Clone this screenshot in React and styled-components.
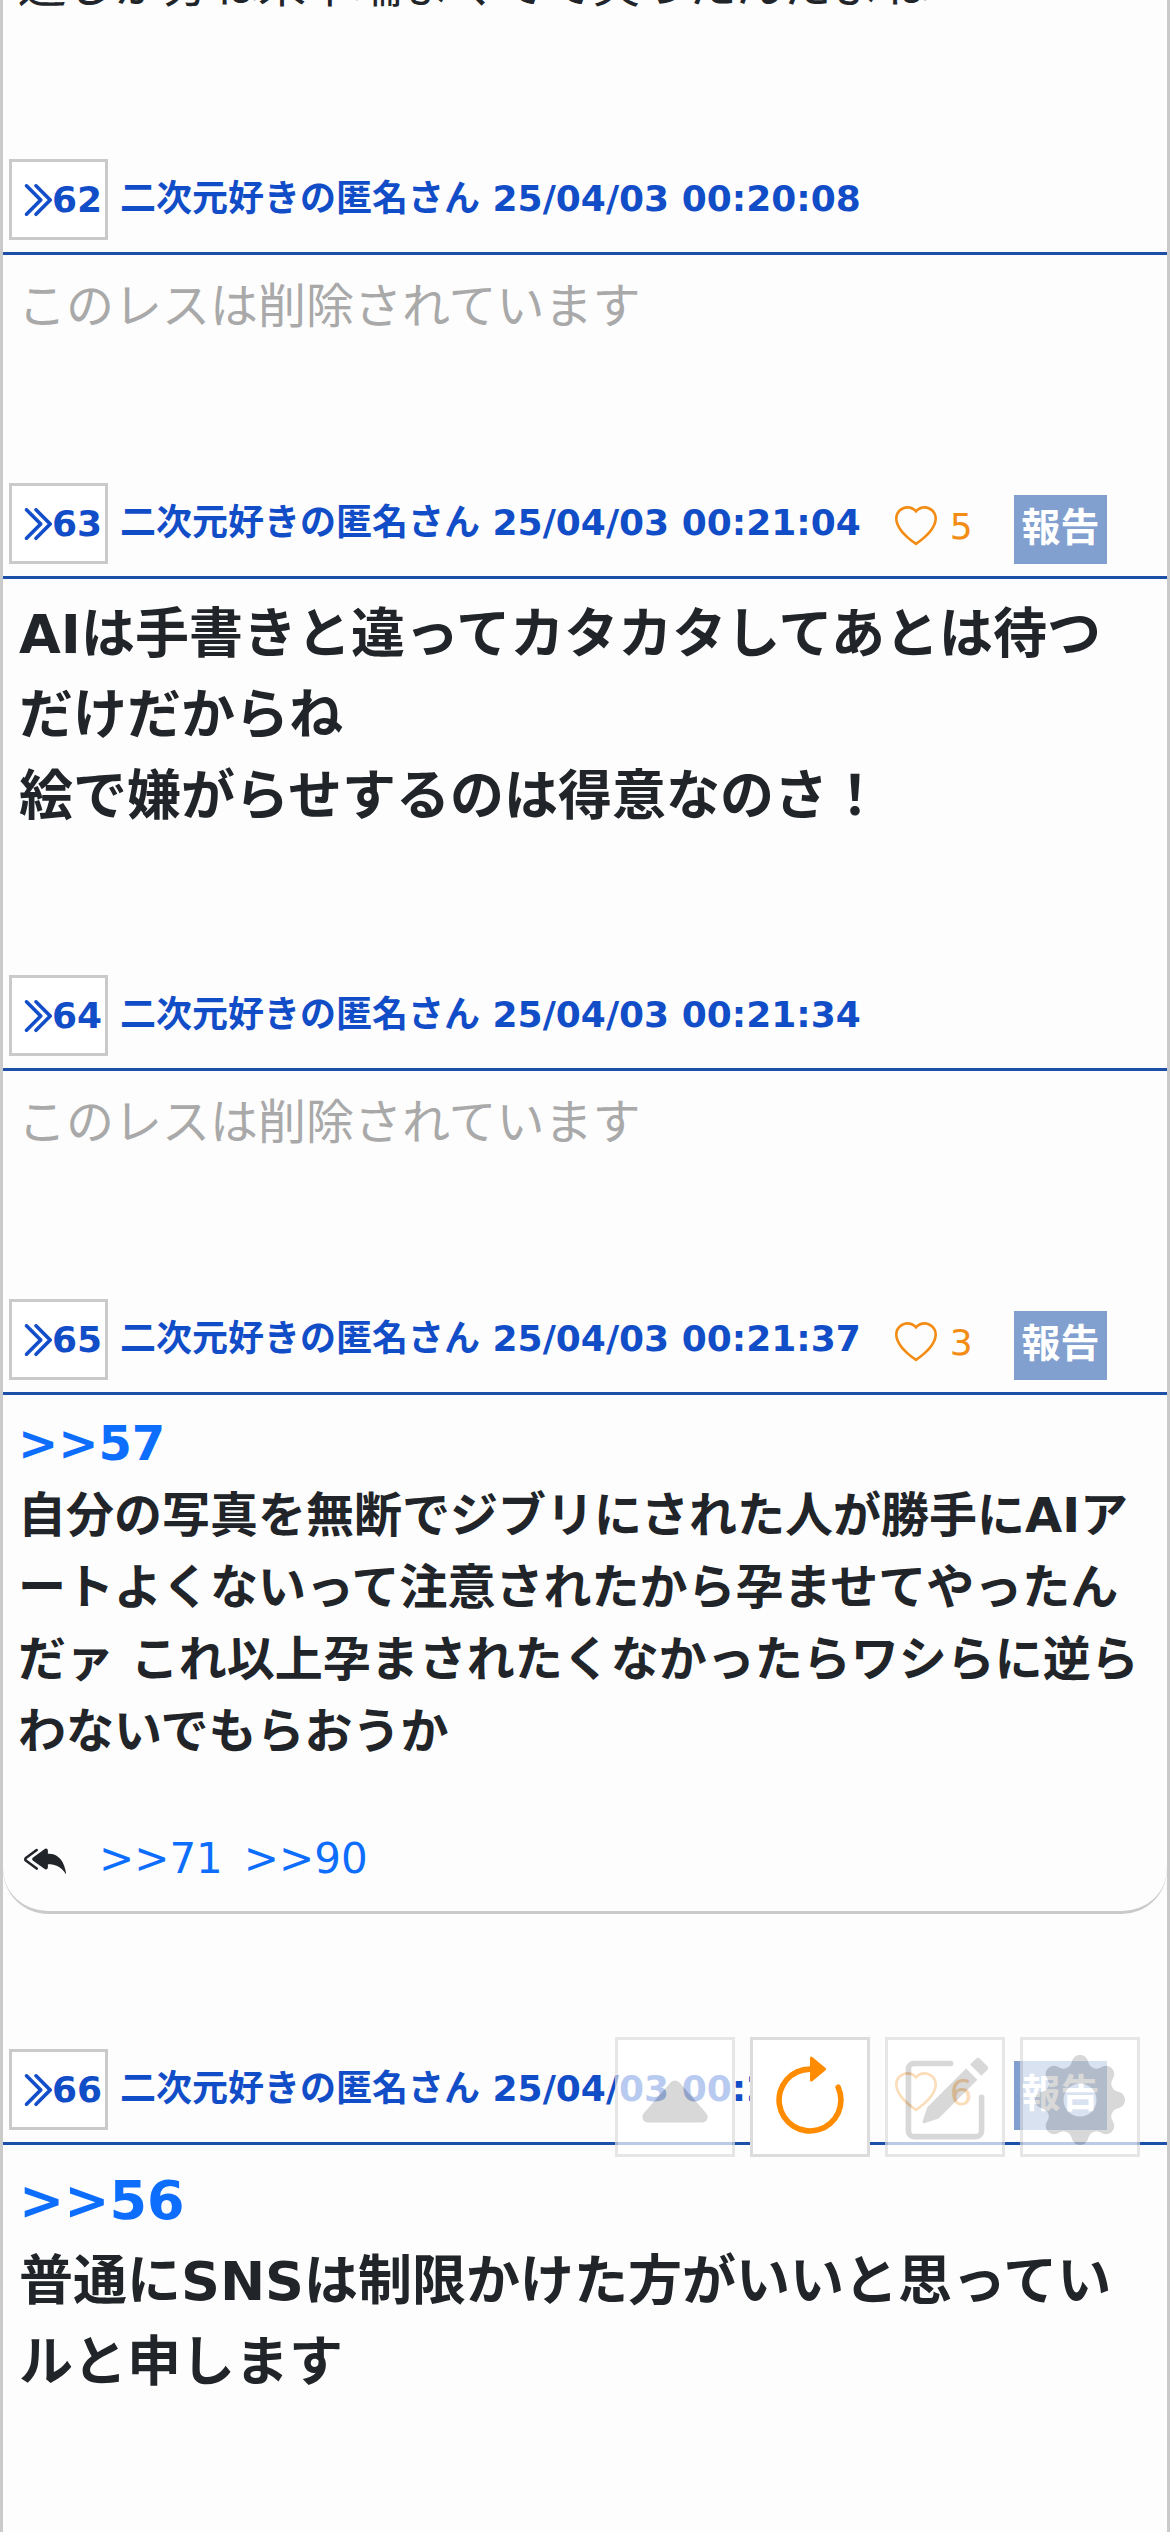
import React from "react";
import styled, { createGlobalStyle } from "styled-components";
import {
  BsArrowClockwise,
  BsCaretUpFill,
  BsChevronDoubleRight,
  BsGearFill,
  BsHeart,
  BsPencilSquare,
  BsReplyAllFill,
} from "react-icons/bs";

const GlobalStyle = createGlobalStyle`
  * {
    box-sizing: border-box;
  }
  html {
    overflow: hidden;
  }
  body {
    margin: 0;
    background-color: #fdfdfd;
    color: #212529;
    font-family: "DejaVu Sans", "Noto Sans CJK JP", sans-serif;
  }
`;

const Thread = styled.main`
  min-height: 100vh;
  overflow: hidden;
  border-left: 3px solid #cacaca;
  border-right: 3px solid #cacaca;
`;

const Post = styled.article`
  padding-top: ${(props) => (props.$first ? "0" : "135px")};
  margin-top: ${(props) => (props.$first ? "-66px" : "0")};
`;

const PostHeader = styled.header`
  display: flex;
  align-items: flex-start;
  height: 96px;
  padding-left: 6px;
  border-bottom: 3px solid #1c4fa8;
  color: #124dc8;
  font-size: 36px;
  font-weight: bold;
`;

const NumberButton = styled.button`
  display: flex;
  align-items: center;
  justify-content: flex-end;
  width: 99px;
  height: 81px;
  padding: 0 3px;
  border: 3px solid #cacaca;
  background-color: #fff;
  color: inherit;
  font: inherit;

  svg {
    margin-right: -3px;
    stroke: currentColor;
    stroke-width: 0.5px;
  }
`;

const Author = styled.span`
  margin-left: 12px;
  line-height: 80px;
  white-space: nowrap;
`;

const LikeButton = styled.button`
  display: flex;
  align-items: center;
  gap: 13px;
  margin: 21px 0 0 34px;
  padding: 0;
  border: 0;
  background: none;
  color: #f28c14;
  font: inherit;
  font-weight: normal;
  line-height: 45px;
`;

const ReportButton = styled.button`
  width: 93px;
  height: 69px;
  margin: 12px 60px 0 auto;
  padding: 0 0 12px;
  border: 0;
  background-color: #819fcf;
  color: #fff;
  font: inherit;
  font-size: 39px;
`;

const Body = styled.div`
  padding: 12px 15px 6px;
  font-size: 48px;
  font-weight: bold;
  line-height: 72px;

  p {
    margin: 0;
  }
`;

const LargeBody = styled(Body)`
  padding: 15px 15px 3px 16px;
  font-size: 54px;
  line-height: 81px;
`;

const PlainBody = styled(Body)`
  padding: 15px 15px 3px;
  font-weight: normal;
`;

const DeletedBody = styled(PlainBody)`
  padding-bottom: 6px;
  color: #a9a9a9;
`;

const Anchor = styled.a`
  color: #0d6efd;
  text-decoration: none;
`;

const Replies = styled.footer`
  display: flex;
  align-items: center;
  gap: 21px;
  padding: 54px 21px 21px;
  border-bottom: 3px solid #cacaca;
  border-radius: 0 0 45px 45px;
  font-size: 42px;
  line-height: 63px;

  svg {
    margin-right: 12px;
  }
`;

const FloatingMenu = styled.nav`
  position: fixed;
  right: 30px;
  bottom: 375px;
  display: flex;
  gap: 15px;
`;

const MenuButton = styled.button`
  display: flex;
  align-items: center;
  justify-content: center;
  width: 120px;
  height: 120px;
  padding: 6px 0 0;
  border: 3px solid #dcdcdc;
  background-color: #fff;
  color: ${(props) => (props.$active ? "#ff8c00" : "#c8c8c8")};
  opacity: ${(props) => (props.$active ? 1 : 0.7)};
`;

const NAME = "二次元好きの匿名さん";

const posts = [
  { id: 62, date: "25/04/03 00:20:08", deleted: true },
  {
    id: 63,
    date: "25/04/03 00:21:04",
    likes: 5,
    large: true,
    lines: [
      "AIは手書きと違ってカタカタしてあとは待つだけだからね",
      "絵で嫌がらせするのは得意なのさ！",
    ],
  },
  { id: 64, date: "25/04/03 00:21:34", deleted: true },
  {
    id: 65,
    date: "25/04/03 00:21:37",
    likes: 3,
    replyTo: 57,
    lines: [
      "自分の写真を無断でジブリにされた人が勝手にAIアートよくないって注意されたから孕ませてやったんだァ これ以上孕まされたくなかったらワシらに逆らわないでもらおうか",
    ],
    replies: [71, 90],
  },
  {
    id: 66,
    date: "25/04/03 00:21:52",
    likes: 6,
    large: true,
    replyTo: 56,
    lines: ["普通にSNSは制限かけた方がいいと思っていルと申します"],
  },
];

function PostBody({ post }) {
  if (post.deleted) {
    return (
      <DeletedBody>
        <p>このレスは削除されています</p>
      </DeletedBody>
    );
  }
  const Wrapper = post.large ? LargeBody : Body;
  return (
    <Wrapper>
      {post.replyTo && (
        <p>
          <Anchor href={`#res${post.replyTo}`}>&gt;&gt;{post.replyTo}</Anchor>
        </p>
      )}
      {post.lines.map((line) => (
        <p key={line}>{line}</p>
      ))}
    </Wrapper>
  );
}

function PostItem({ post }) {
  return (
    <Post id={`res${post.id}`}>
      <PostHeader>
        <NumberButton type="button">
          <BsChevronDoubleRight size={38} aria-hidden="true" />
          {post.id}
        </NumberButton>
        <Author>
          {NAME} {post.date}
        </Author>
        {post.likes && (
          <>
            <LikeButton type="button" aria-label={`いいね ${post.likes}`}>
              <BsHeart size={42} />
              {post.likes}
            </LikeButton>
            <ReportButton type="button">報告</ReportButton>
          </>
        )}
      </PostHeader>
      <PostBody post={post} />
      {post.replies && (
        <Replies>
          <BsReplyAllFill size={42} aria-hidden="true" />
          {post.replies.map((id) => (
            <Anchor key={id} href={`#res${id}`}>
              &gt;&gt;{id}
            </Anchor>
          ))}
        </Replies>
      )}
    </Post>
  );
}

export default function App() {
  return (
    <>
      <GlobalStyle />
      <Thread lang="ja">
        <Post $first>
          <PlainBody>
            <p>通しか分ね来半端まくてて笑ったんだよね</p>
          </PlainBody>
        </Post>
        {posts.map((post) => (
          <PostItem key={post.id} post={post} />
        ))}
      </Thread>
      <FloatingMenu>
        <MenuButton type="button" aria-label="上へ">
          <BsCaretUpFill size={90} />
        </MenuButton>
        <MenuButton type="button" aria-label="更新" $active>
          <BsArrowClockwise size={90} />
        </MenuButton>
        <MenuButton type="button" aria-label="書き込む">
          <BsPencilSquare size={90} />
        </MenuButton>
        <MenuButton type="button" aria-label="設定">
          <BsGearFill size={90} />
        </MenuButton>
      </FloatingMenu>
    </>
  );
}
